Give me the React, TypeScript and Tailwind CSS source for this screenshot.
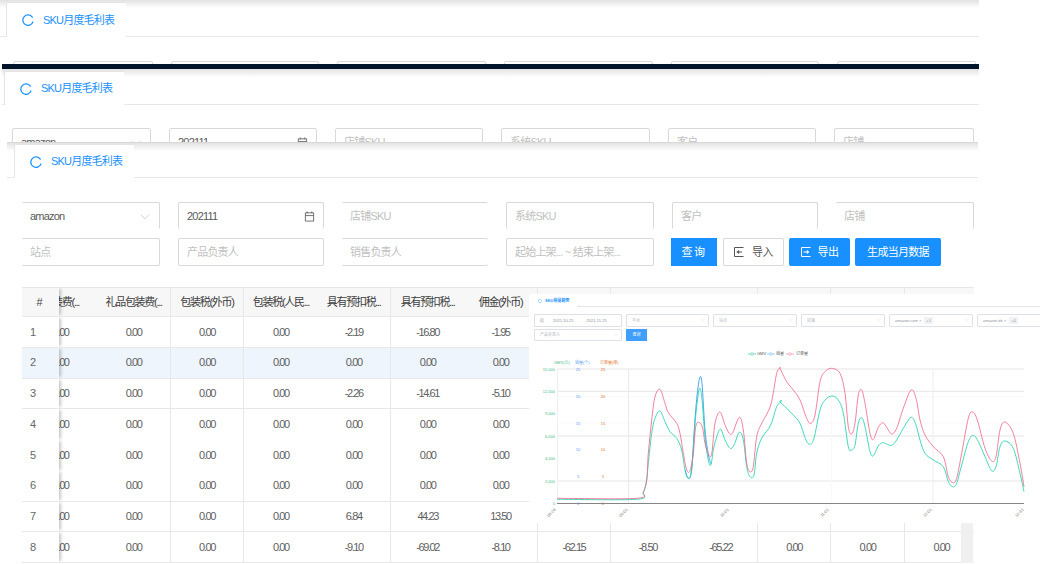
import React from "react";
import { ChevronDown } from "lucide-react";

const FONT = "font-['Liberation_Sans','Noto_Sans_CJK_SC',sans-serif]";

function RefreshIcon({ className }: { className: string }) {
  return (
    <svg viewBox="0 0 12 12" className={className} fill="none" stroke="#1890ff" strokeWidth="1.25" strokeLinecap="round">
      <path d="M10.3 3.2A5.2 5.2 0 1 0 10.9 8" />
    </svg>
  );
}

function CalendarIcon() {
  return (
    <svg viewBox="0 0 12 12" className="absolute right-[8px] top-[8px] w-[11px] h-[11px]" fill="none" stroke="#666" strokeWidth="1">
      <path d="M1.5 2h9v9h-9zM1.5 5h9M3.5 .5v2M8.5 .5v2" />
    </svg>
  );
}

function TabHeader({ left, height, tabHeight }: { left: string; height: string; tabHeight: string }) {
  return (
    <div className={`flex items-end ${height} border-b border-[#e8e8e8] bg-linear-to-b from-[#e2e2e2] to-white to-[8px]`}>
      <div className={`${left} ${tabHeight} w-[120px] -mb-px bg-white border-l border-t border-[#e4e4e4] flex items-center pl-[15px] gap-[9px]`}>
        <RefreshIcon className="w-[12px] h-[12px]" />
        <span className="text-[11px] tracking-[-0.8px] text-[#1890ff] whitespace-nowrap">SKU月度毛利表</span>
      </div>
    </div>
  );
}

function Field({
  text,
  width,
  value,
  kind,
  edge,
}: {
  text: string;
  width: string;
  value?: boolean;
  kind?: "select" | "date";
  edge?: string;
}) {
  return (
    <div
      className={`relative shrink-0 h-full ${width} border-[#d9d9d9] rounded-[2px] flex items-center pl-[8px] ${edge ?? "border"}`}
    >
      <span className={`text-[11px] tracking-[-0.8px] whitespace-nowrap ${value ? "text-[#595959]" : "text-[#bfbfbf]"}`}>{text}</span>
      {kind === "select" && <ChevronDown className="absolute right-[6px] top-[6px] w-[16px] h-[16px] text-[#bbbbbb]" strokeWidth={0.9} />}
      {kind === "date" && <CalendarIcon />}
    </div>
  );
}

const FIRST = ["amazon", "202111", "店铺SKU", "系统SKU", "客户", "店铺"];

function CutRow({ widths, className }: { widths: string[]; className: string }) {
  return (
    <div className={`flex gap-[18px] h-[28px] ${className}`}>
      {FIRST.map((t, i) => (
        <Field
          key={t}
          text={t}
          width={widths[i]}
          value={i < 2}
          kind={i === 0 ? "select" : i === 1 ? "date" : undefined}
        />
      ))}
    </div>
  );
}

const HEAD = [
  "包装费(...", "礼品包装费(...", "包装税(外币)", "包装税(人民...", "具有预扣税...", "具有预扣税...", "佣金(外币)",
  "佣金(人民...", "退款(外币)", "退款(人民...", "其他(外币)", "其他(人民...", "广告(外币)",
];
const Z = "0.00";
const ROWS: string[][] = [
  [Z, Z, Z, Z, "-2.19", "-16.80", "-1.95", Z, Z, Z, Z, Z, Z],
  [Z, Z, Z, Z, Z, Z, Z, Z, Z, Z, Z, Z, Z],
  [Z, Z, Z, Z, "-2.26", "-14.61", "-5.10", Z, Z, Z, Z, Z, Z],
  [Z, Z, Z, Z, Z, Z, Z, Z, Z, Z, Z, Z, Z],
  [Z, Z, Z, Z, Z, Z, Z, Z, Z, Z, Z, Z, Z],
  [Z, Z, Z, Z, Z, Z, Z, Z, Z, Z, Z, Z, Z],
  [Z, Z, Z, Z, "6.84", "44.23", "13.50", Z, Z, Z, Z, Z, Z],
  [Z, Z, Z, Z, "-9.10", "-69.02", "-8.10", "-62.15", "-8.50", "-65.22", Z, Z, Z],
];
const LINED = [false, true, true, false, true, false, true, true, false, true, true, true, false];
const NO_BOTTOM = [3, 4];

function TableBlock() {
  return (
    <div className="relative ml-[15px] mt-[21px] w-[952px] text-center">
      <div className="flex h-[30px] bg-[#f7f7f7] border-y border-[#e8e8e8] overflow-hidden items-stretch">
        <div className="relative z-10 shrink-0 w-[37px] pr-[2px] bg-[#f7f7f7] shadow-[3px_0_3px_-1px_rgba(0,0,0,0.22)] flex items-center justify-center text-[11px] font-medium text-[#444]">#</div>
        {HEAD.map((h, i) => (
          <div
            key={i}
            className={`shrink-0 w-[73.4px] flex items-center justify-center text-[11px] tracking-[-1.3px] text-[#3c3c3c] whitespace-nowrap ${i === 0 ? "-ml-[35px]" : ""} ${LINED[i] ? "border-r border-[#e8e8e8]" : ""}`}
          >
            {h}
          </div>
        ))}
      </div>
      {ROWS.map((r, ri) => {
        const bg = ri === 1 ? "bg-[#eff5fd]" : "bg-white";
        return (
          <div
            key={ri}
            className={`flex h-[30.75px] overflow-hidden items-stretch ${bg} ${NO_BOTTOM.includes(ri) ? "" : "border-b border-[#e8e8e8]"}`}
          >
            <div className={`relative z-10 shrink-0 w-[37px] ${bg} shadow-[3px_0_3px_-1px_rgba(0,0,0,0.22)] flex items-center pl-[8px] text-[11px] text-[#666]`}>{ri + 1}</div>
            {r.map((c, i) => (
              <div
                key={i}
                className={`shrink-0 w-[73.4px] flex items-center justify-center text-[11px] tracking-[-1.4px] text-[#606060] ${i === 0 ? "-ml-[35px]" : ""} ${LINED[i] ? "border-r border-[#e8e8e8]" : ""}`}
              >
                {c}
              </div>
            ))}
          </div>
        );
      })}
      <div className="absolute right-[1px] top-[31px] bottom-0 w-[12px] bg-[#f0f0f0] z-20" />
    </div>
  );
}

type P = [number, number];
const z5 = (pts: number[][]): P[] => pts.map(([x, y]) => [530 + x / 3, 340 + y / 3]);
const z6 = (pts: number[][]): P[] => pts.map(([x, y]) => [780 + x / 3, 340 + y / 3]);

function smooth(pts: P[]) {
  let d = `M${pts[0][0].toFixed(1)} ${pts[0][1].toFixed(1)}`;
  for (let i = 0; i < pts.length - 1; i++) {
    const p0 = pts[Math.max(0, i - 1)];
    const p1 = pts[i];
    const p2 = pts[i + 1];
    const p3 = pts[Math.min(pts.length - 1, i + 2)];
    const c1x = p1[0] + (p2[0] - p0[0]) / 6;
    const c1y = p1[1] + (p2[1] - p0[1]) / 6;
    const c2x = p2[0] - (p3[0] - p1[0]) / 6;
    const c2y = p2[1] - (p3[1] - p1[1]) / 6;
    d += `C${c1x.toFixed(1)} ${c1y.toFixed(1)} ${c2x.toFixed(1)} ${c2y.toFixed(1)} ${p2[0].toFixed(1)} ${p2[1].toFixed(1)}`;
  }
  return d;
}

const PINK: P[] = [
  ...z5([[82,475],[320,475],[340,455],[350,420],[355,340],[365,240],[375,170],[390,148],[405,190],[415,218],[440,250],[450,280],[460,340],[470,390],[480,392],[490,340],[497,260],[508,247],[518,265],[525,310],[535,342],[545,342],[555,250],[570,216],[585,255],[598,280],[608,278],[628,232],[640,270],[650,370],[660,395],[670,380],[680,290],[695,250],[722,195],[740,100],[750,85]]),
  ...z6([[0,85],[20,125],[40,150],[60,180],[80,235],[92,250],[105,225],[120,125],[135,95],[155,85],[180,100],[195,160],[205,260],[215,282],[225,250],[235,165],[245,150],[255,190],[270,280],[280,298],[295,262],[308,248],[320,262],[335,282],[350,265],[370,205],[393,150],[408,175],[420,240],[435,285],[460,320],[490,350],[505,410],[518,428],[530,415],[545,340],[565,235],[578,216],[592,240],[615,325],[635,363],[648,350],[660,270],[675,246],[700,280],[720,370],[732,440]]),
];
const TEAL: P[] = [
  ...z5([[82,478],[320,478],[340,458],[350,420],[355,370],[365,280],[375,235],[390,213],[405,245],[420,275],[440,295],[455,330],[465,390],[475,415],[485,390],[495,250],[507,150],[515,170],[525,290],[535,360],[543,374],[552,320],[570,268],[585,300],[600,325],[612,315],[628,277],[640,300],[650,380],[660,410],[672,405],[680,340],[695,295],[722,255],[740,200],[755,183]]),
  ...z6([[0,185],[20,205],[40,225],[60,250],[78,300],[90,313],[102,295],[120,210],[135,180],[155,168],[175,180],[190,220],[205,320],[215,330],[225,315],[235,250],[245,233],[255,260],[270,335],[280,347],[295,318],[308,308],[320,312],[335,316],[350,300],[370,265],[393,232],[408,255],[420,300],[435,340],[460,360],[490,380],[505,425],[518,440],[530,430],[545,375],[565,305],[580,286],[595,305],[615,350],[635,392],[648,380],[660,320],[675,303],[700,325],[720,400],[732,455]]),
];
const BLUE: P[] = z5([[465,390],[475,415],[485,385],[497,210],[508,118],[516,130],[525,270],[535,342],[543,372]]);

function Chart() {
  const left: [string, number][] = [["15,000", 369], ["12,000", 391], ["9,000", 413.5], ["6,000", 436], ["4,000", 458], ["2,000", 481], ["0", 503]];
  const right: [string, number][] = [["25", 369], ["20", 396], ["15", 423], ["10", 449], ["5", 476], ["0", 503]];
  const xs: [string, number][] = [["08-28", 553], ["09-01", 625], ["10-01", 726], ["11-01", 826], ["12-01", 929], ["12-31", 1021]];
  return (
    <svg viewBox="529 346 511 177" className="block mt-[5px] w-[511px] h-[177px]" fontSize="4">
      {[369, 391.3, 436, 481].map((y) => (
        <line key={y} x1="557" x2="1024" y1={y} y2={y} stroke="#e2e2e2" strokeWidth="0.9" />
      ))}
      <line x1="557" x2="1024" y1="396.7" y2="396.7" stroke="#f5f5f5" strokeWidth="0.8" />
      <line x1="557" x2="1024" y1="423" y2="423" stroke="#f7f7f7" strokeWidth="0.8" />
      <line x1="557.5" x2="557.5" y1="369" y2="503" stroke="#ececec" strokeWidth="0.8" />
      <line x1="628.5" x2="628.5" y1="369" y2="503" stroke="#e8e8e8" strokeWidth="0.9" />
      <line x1="831.5" x2="831.5" y1="369" y2="503" stroke="#f8f8f8" strokeWidth="0.9" />
      <line x1="933" x2="933" y1="369" y2="503" stroke="#ececec" strokeWidth="0.9" />
      <line x1="557" x2="1024" y1="503.5" y2="503.5" stroke="#777" strokeWidth="0.9" />

      <g>
        <line x1="748" x2="756" y1="354" y2="354" stroke="#3ecfb0" strokeWidth="0.7" />
        <circle cx="752" cy="354" r="1.3" fill="#fff" stroke="#3ecfb0" strokeWidth="0.6" />
        <text x="757" y="355.4" fill="#555">GMV</text>
        <line x1="767" x2="775" y1="354" y2="354" stroke="#74b9f5" strokeWidth="0.7" />
        <circle cx="771" cy="354" r="1.3" fill="#fff" stroke="#74b9f5" strokeWidth="0.6" />
        <text x="776" y="355.4" fill="#555">销量</text>
        <line x1="786" x2="794" y1="354" y2="354" stroke="#f18ba6" strokeWidth="0.7" />
        <circle cx="790" cy="354" r="1.3" fill="#fff" stroke="#f18ba6" strokeWidth="0.6" />
        <text x="796" y="355.4" fill="#555">订单量</text>
      </g>

      <text x="554" y="364" fill="#49b886">GMV(元)</text>
      <text x="575" y="364" fill="#5b9bf0">销量(个)</text>
      <text x="600" y="364" fill="#e0702a">订单量(单)</text>

      {left.map(([t, y]) => (
        <text key={t} x="555" y={y + 1.5} textAnchor="end" fill="#49b886">{t}</text>
      ))}
      {right.map(([t, y]) => (
        <g key={t}>
          <text x="578" y={y + 1.5} textAnchor="middle" fill="#5b9bf0">{t}</text>
          <text x="603" y={y + 1.5} textAnchor="middle" fill="#e0702a">{t}</text>
        </g>
      ))}
      {xs.map(([t, x]) => (
        <text key={t} x={x + 3} y="510" textAnchor="end" fill="#777" transform={`rotate(-45 ${x + 3} 510)`}>{t}</text>
      ))}

      <path d={smooth(BLUE)} fill="none" stroke="#4da6f0" strokeWidth="1" />
      <path d={smooth(TEAL)} fill="none" stroke="#1fd1b0" strokeWidth="0.85" />
      <path d={smooth(PINK)} fill="none" stroke="#ee6a8c" strokeWidth="0.85" />
    </svg>
  );
}

function MiniField({ width, children }: { width: string; children: React.ReactNode }) {
  return (
    <div className={`shrink-0 h-full ${width} border-[1.5px] border-[#dfe1e8] rounded-[1px] flex items-center pl-[5px] gap-[3px] text-[4px] text-[#b0b4bb] whitespace-nowrap overflow-hidden relative`}>
      {children}
    </div>
  );
}

function MiniChevron() {
  return <ChevronDown className="absolute right-[3px] top-[3px] w-[4px] h-[4px] text-[#aaa]" strokeWidth={1.5} />;
}

function Tag({ children }: { children: React.ReactNode }) {
  return <span className="bg-[#f0f2f5] text-[#909399] px-[2px] leading-[7px]">{children}</span>;
}

function Overlay() {
  return (
    <div className="absolute left-[529px] top-[294px] w-[511px] h-[229px] bg-white z-30 overflow-hidden">
      <div className="flex items-end h-[13px] border-b border-[#e4e4e4]">
        <div className="w-[48px] h-[13px] -mb-px bg-white flex items-center pl-[9px] gap-[3px]">
          <RefreshIcon className="w-[4px] h-[4px]" />
          <span className="text-[4px] font-bold text-[#1890ff] whitespace-nowrap">SKU销量趋势</span>
        </div>
      </div>
      <div className="flex gap-[4px] h-[13px] mt-[7px] ml-[5px]">
        <MiniField width="w-[88px]">
          <span>起</span>
          <span className="ml-[6px] text-[#8a8fa0]">2021-10-25</span>
          <span className="ml-[10px] text-[#8a8fa0]">2021-11-25</span>
        </MiniField>
        <MiniField width="w-[83px]">平台<MiniChevron /></MiniField>
        <MiniField width="w-[84px]">站点<MiniChevron /></MiniField>
        <MiniField width="w-[84px]">店铺<MiniChevron /></MiniField>
        <MiniField width="w-[84px]"><span className="text-[#909399]">amazon.com ×</span><Tag>+1</Tag><MiniChevron /></MiniField>
        <MiniField width="w-[70px]"><span className="text-[#909399]">amazon.de ×</span><Tag>+4</Tag></MiniField>
      </div>
      <div className="flex gap-[4px] h-[12px] mt-[2px] ml-[5px]">
        <MiniField width="w-[88px]">产品负责人<MiniChevron /></MiniField>
        <div className="w-[21px] bg-[#409eff] text-white text-[4px] flex items-center justify-center">查询</div>
      </div>
      <Chart />
    </div>
  );
}

function ImportIcon() {
  return (
    <svg viewBox="0 0 10 10" className="w-[10px] h-[10px]" fill="none" stroke="currentColor" strokeWidth="1">
      <path d="M9.5 .5H.5v9h9M8 5H3.5" />
      <path d="M4.8 3.4 2.6 5l2.2 1.6z" fill="currentColor" strokeWidth="0.5" />
    </svg>
  );
}

function ExportIcon() {
  return (
    <svg viewBox="0 0 10 10" className="w-[10px] h-[10px]" fill="none" stroke="currentColor" strokeWidth="1">
      <path d="M9.5 .5H.5v9h9M2.5 5H7" />
      <path d="M6 3.4 8.2 5 6 6.6z" fill="currentColor" strokeWidth="0.5" />
    </svg>
  );
}

export default function App() {
  return (
    <div className={`relative w-[1040px] h-[564px] overflow-hidden bg-white ${FONT}`}>
      <section className="h-[64px] w-[979px] overflow-hidden">
        <TabHeader left="ml-[6px]" height="h-[37px]" tabHeight="h-[35px]" />
        <CutRow
          className="mt-[24px] ml-[13px]"
          widths={["w-[140px]", "w-[148px]", "w-[149px]", "w-[149px]", "w-[148px]", "w-[139px]"]}
        />
      </section>
      <div className="ml-[2px] w-[977px] h-[5px] bg-[#001529]" />
      <section className="ml-[2px] w-[977px] h-[73px] overflow-hidden">
        <TabHeader left="ml-[2px]" height="h-[36px]" tabHeight="h-[34px]" />
        <CutRow
          className="mt-[23px] ml-[10px]"
          widths={["w-[139px]", "w-[148px]", "w-[148px]", "w-[149px]", "w-[148px]", "w-[140px]"]}
        />
      </section>
      <section className="ml-[7px] w-[971px] h-[422px] overflow-hidden">
        <div className="border-t border-[#d8d8d8]">
          <TabHeader left="ml-[7px]" height="h-[35px]" tabHeight="h-[34px]" />
        </div>
        <div className="flex gap-[18px] h-[27px] mt-[24px] ml-[15px]">
          <Field text="amazon" value width="w-[138px]" kind="select" edge="border-t border-r pt-[1px]" />
          <Field text="202111" value width="w-[146px]" kind="date" edge="border-t border-x pt-[1px]" />
          <Field text="店铺SKU" width="w-[146px]" edge="border-t pt-[1px]" />
          <Field text="系统SKU" width="w-[148px]" edge="border-t border-x pt-[1px]" />
          <Field text="客户" width="w-[146px]" edge="border-t border-x pt-[1px]" />
          <Field text="店铺" width="w-[138px]" edge="border-t border-r pt-[1px]" />
        </div>
        <div className="flex gap-[18px] h-[28px] mt-[9px] ml-[15px]">
          <Field text="站点" width="w-[138px]" edge="border-y border-r" />
          <Field text="产品负责人" width="w-[146px]" />
          <Field text="销售负责人" width="w-[146px]" edge="border-y" />
          <Field text="起始上架...  ~ 结束上架..." width="w-[148px]" />
          <div className="flex gap-[5px] h-full text-[11px] -ml-[1px]">
            <button className="w-[46px] bg-[#1890ff] text-white tracking-[1.5px]">查询</button>
            <button className="ml-[1px] w-[61px] border border-[#d9d9d9] rounded-[2px] text-[#555] flex items-center justify-center gap-[8px] tracking-[-0.5px]">
              <ImportIcon />导入
            </button>
            <button className="w-[61px] bg-[#1890ff] rounded-[2px] text-white flex items-center justify-center gap-[7px] tracking-[-0.5px]">
              <ExportIcon />导出
            </button>
            <button className="w-[86px] bg-[#1890ff] rounded-[2px] text-white tracking-[-0.7px]">生成当月数据</button>
          </div>
        </div>
        <TableBlock />
      </section>
      <Overlay />
    </div>
  );
}
